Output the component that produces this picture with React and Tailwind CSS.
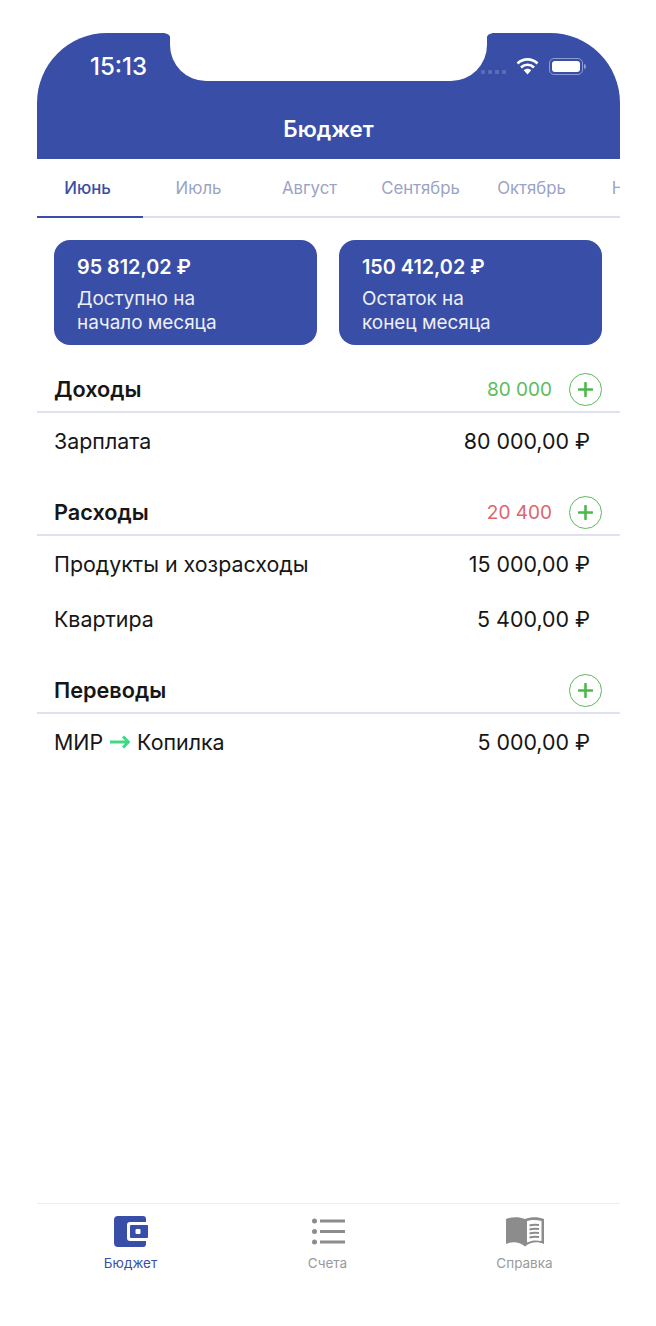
const tabs = ["Июнь", "Июль", "Август", "Сентябрь", "Октябрь", "Ноябрь"];

function Plus() {
  return (
    <div className="-mt-[1px] flex h-[33px] w-[33px] shrink-0 items-center justify-center rounded-full border-[1.3px] border-[#5cb85c]">
      <svg width="15" height="15" viewBox="0 0 15 15" aria-hidden="true">
        <path d="M7.5 1v13M1 7.500h13" stroke="#4cb84c" strokeWidth="2.6" strokeLinecap="round" />
      </svg>
    </div>
  );
}

function Header({ title, total, color }) {
  return (
    <div className="flex h-[68px] items-end justify-between border-b-2 border-[#dfe1ec] pr-[18px] pb-[5px] pl-[17px]">
      <span className="text-[21.7px] leading-[33px] font-semibold text-[#161616]">{title}</span>
      <div className="flex items-center gap-[17px]">
        {total && <span className={`text-[19px] leading-[33px] ${color}`}>{total}</span>}
        <Plus />
      </div>
    </div>
  );
}

function Row({ children, amount }) {
  return (
    <div className="flex h-[55px] items-center justify-between pt-[1px] pr-[30px] pl-[17px] text-[21.4px] text-[#161616]">
      <div className="flex items-center">{children}</div>
      <span>{amount}</span>
    </div>
  );
}

function Card({ amount, line1, line2 }) {
  return (
    <div className="h-[105px] flex-1 rounded-[16px] bg-[#394ea7] px-[23px] pt-[14px] text-white">
      <div className="text-[19.8px] leading-[26px] font-semibold">{amount}</div>
      <div className="mt-[7px] text-[18.9px] leading-[24px] text-[#eef0f8]">
        {line1}
        <br />
        {line2}
      </div>
    </div>
  );
}

function Tab({ label, color, children }) {
  return (
    <div className={`flex w-[197px] flex-col items-center pt-[12px] ${color}`}>
      {children}
      <span className="mt-[7px] leading-[18px]">{label}</span>
    </div>
  );
}

export default function App() {
  return (
    <div className="h-[1326px] w-[656px] overflow-hidden bg-white pt-[33px] pr-[36px] pl-[37px] font-['Inter',sans-serif]">
      <header className="relative h-[126px] rounded-t-[70px] bg-[#394ea7] text-white">
        <div className="absolute top-0 left-[133px] h-[48px] w-[317px] rounded-b-[36px] bg-white" />
        <div className="absolute top-0 left-[128px] h-[6px] w-[6px] bg-[radial-gradient(circle_at_0_100%,transparent_5px,white_6px)]" />
        <div className="absolute top-0 left-[449px] h-[6px] w-[6px] bg-[radial-gradient(circle_at_100%_100%,transparent_5px,white_6px)]" />
        <span className="absolute top-[19px] left-[53px] text-[24px] leading-[30px] font-medium">15:13</span>
        <div className="absolute top-[37px] left-[444px] flex gap-[3px]">
          <i className="h-[4px] w-[4px] rounded-[1px] bg-[#5b6db8]" />
          <i className="h-[4px] w-[4px] rounded-[1px] bg-[#5b6db8]" />
          <i className="h-[4px] w-[4px] rounded-[1px] bg-[#5b6db8]" />
          <i className="h-[4px] w-[4px] rounded-[1px] bg-[#5b6db8]" />
        </div>
        <svg className="absolute top-[24px] left-[479px]" width="23" height="18" viewBox="0 0 23 18" aria-hidden="true">
          <path d="M1.5 6.500C7 1 16 1 21.500 6.500M5 10.500C8.700 6.800 14.300 6.800 18 10.500" fill="none" stroke="white" strokeWidth="2.6" />
          <path d="M7.800 13.200C9.800 11.200 13.200 11.200 15.200 13.200L11.500 17.400Z" fill="white" />
        </svg>
        <div className="absolute top-[25px] left-[512px] flex h-[17px] w-[34px] items-center rounded-[5px] border border-[#8d9bd0] p-[2px]">
          <div className="h-full w-full rounded-[3px] bg-white" />
        </div>
        <div className="absolute top-[31px] left-[547px] h-[5px] w-[2px] rounded-r-[2px] bg-[#8d9bd0]" />
        <h1 className="absolute inset-x-0 top-[81px] text-center text-[22.2px] leading-[30px] font-semibold">Бюджет</h1>
      </header>

      <nav className="relative flex h-[59px] items-center overflow-hidden">
        <div className="-ml-[5px] flex">
          {tabs.map((t, i) => (
            <span
              key={t}
              className={`w-[111px] shrink-0 text-center text-[16.8px] ${i === 0 ? "font-medium text-[#394ea7]" : "text-[#9ba3c4]"}`}
            >
              {t}
            </span>
          ))}
        </div>
        <div className="absolute inset-x-0 bottom-0 h-[2px] bg-[#dcdfec]" />
        <div className="absolute bottom-0 left-0 h-[2px] w-[106px] bg-[#394ea7]" />
      </nav>

      <div className="flex gap-[22px] pt-[22px] pr-[18px] pl-[17px]">
        <Card amount="95 812,02 ₽" line1="Доступно на" line2="начало месяца" />
        <Card amount="150 412,02 ₽" line1="Остаток на" line2="конец месяца" />
      </div>

      <Header title="Доходы" total="80 000" color="text-[#5cbc5c]" />
      <Row amount="80 000,00 ₽">Зарплата</Row>

      <Header title="Расходы" total="20 400" color="text-[#e0646c]" />
      <Row amount="15 000,00 ₽">Продукты и хозрасходы</Row>
      <Row amount="5 400,00 ₽">Квартира</Row>

      <Header title="Переводы" />
      <Row amount="5 000,00 ₽">
        МИР
        <svg className="mx-[7px]" width="20" height="14" viewBox="0 0 20 14" aria-hidden="true">
          <path d="M0 7h18M13 1.500L18.500 7L13 12.500" fill="none" stroke="#3ddc84" strokeWidth="3" />
        </svg>
        Копилка
      </Row>

      <div className="h-[434px]" />

      <footer className="flex h-[80px] justify-center border-t border-[#eeeeee] pr-[2px] text-[13.5px]">
        <div className="-mx-[5px] flex">
          <Tab label="Бюджет" color="text-[#394ea7]">
            <svg width="34" height="31" viewBox="0 0 34 31" aria-hidden="true">
              <path d="M4 0H29a3 3 0 0 1 3 3V6H16a3 3 0 0 0-3 3V22a3 3 0 0 0 3 3H32v3a3 3 0 0 1-3 3H4a4 4 0 0 1-4-4V4a4 4 0 0 1 4-4Z" fill="#394ea7" />
              <rect x="16" y="9" width="18" height="13" rx="1" fill="#394ea7" />
              <rect x="21.500" y="13" width="5" height="5" rx="1" fill="white" />
            </svg>
          </Tab>
          <Tab label="Счета" color="text-[#9a9a9a]">
            <svg width="34" height="31" viewBox="0 0 34 31" aria-hidden="true">
              <g fill="#8c8c8c">
                <circle cx="3.500" cy="5" r="2.500" />
                <circle cx="3.500" cy="15.500" r="2.500" />
                <circle cx="3.500" cy="26" r="2.500" />
                <rect x="9" y="3.500" width="25" height="3" />
                <rect x="9" y="14" width="25" height="3" />
                <rect x="9" y="24.500" width="25" height="3" />
              </g>
            </svg>
          </Tab>
          <Tab label="Справка" color="text-[#9a9a9a]">
            <svg width="38" height="31" viewBox="0 0 38 31" aria-hidden="true">
              <path d="M0 3C6 0.500 13 0.500 19 3C25 0.500 32 0.500 38 3V28C32 25.500 25 25.500 19 30.500C13 25.500 6 25.500 0 28Z" fill="#8c8c8c" />
              <path d="M21 5C25 3.500 31 3.500 35.500 5V25C31 24 25.500 24 21 26.500Z" fill="white" />
              <path d="M23.500 9.500C26.500 8.500 30 8.500 33 9M23.500 13.500C26.500 12.500 30 12.500 33 13M23.500 17.500C26.500 16.500 30 16.500 33 17M23.500 21.500C26.500 20.500 30 20.500 33 21" fill="none" stroke="#8c8c8c" strokeWidth="2" />
            </svg>
          </Tab>
        </div>
      </footer>
    </div>
  );
}
